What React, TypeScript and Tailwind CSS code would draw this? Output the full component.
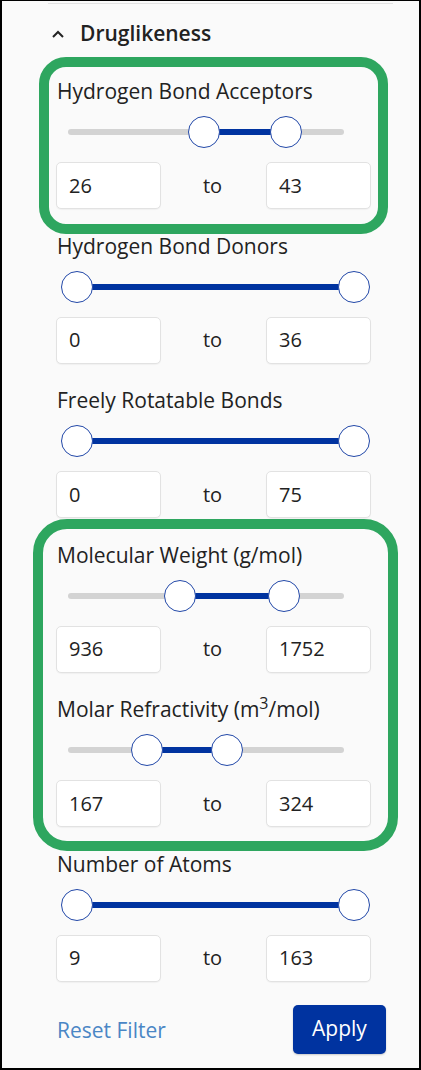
import React from "react";

type Row = { label: React.ReactNode; min: string; max: string; a: number; b: number };

const rows: Row[] = [
  { label: "Hydrogen Bond Acceptors", min: "26", max: "43", a: 204, b: 286 },
  { label: "Hydrogen Bond Donors", min: "0", max: "36", a: 77, b: 354 },
  { label: "Freely Rotatable Bonds", min: "0", max: "75", a: 77, b: 354 },
  { label: "Molecular Weight (g/mol)", min: "936", max: "1752", a: 180, b: 284 },
  {
    label: (
      <>
        Molar Refractivity (m<sup className="text-[16px]">3</sup>/mol)
      </>
    ),
    min: "167",
    max: "324",
    a: 147,
    b: 227,
  },
  { label: "Number of Atoms", min: "9", max: "163", a: 77, b: 354 },
];

const ORIGIN = 61; // page x of the slider box

function Slider({ a, b }: { a: number; b: number }) {
  const ca = a - ORIGIN;
  const cb = b - ORIGIN;
  return (
    <div className="relative h-[57px] w-[309px] ml-[5px]">
      <div className="absolute left-[7px] w-[276px] top-[24px] h-[6px] rounded-full bg-[#d3d3d3]" />
      <div className="absolute top-[24px] h-[6px] bg-[#0033a0]" style={{ left: ca, width: cb - ca }} />
      <div
        className="absolute top-[11px] w-[32px] h-[32px] rounded-full bg-white border border-[#2248a8]"
        style={{ left: ca - 16 }}
      />
      <div
        className="absolute top-[11px] w-[32px] h-[32px] rounded-full bg-white border border-[#2248a8]"
        style={{ left: cb - 16 }}
      />
    </div>
  );
}

function Box({ v }: { v: string }) {
  return (
    <div className="w-[105px] h-[47px] rounded-[5px] bg-white border border-[#e2e2e2] shadow-[0_1px_1px_rgba(0,0,0,0.04)] flex items-center pl-[12px] text-[20px] text-[#222]">
      {v}
    </div>
  );
}

function Section({ r }: { r: Row }) {
  return (
    <div className="flex flex-col">
      <div className="h-[28px] leading-[28px] text-[21px] text-[#222] pl-[1px] whitespace-nowrap">{r.label}</div>
      <Slider a={r.a} b={r.b} />
      <div className="flex items-center justify-between w-[315px]">
        <Box v={r.min} />
        <span className="text-[20px] text-[#222] pr-[2px]">to</span>
        <Box v={r.max} />
      </div>
    </div>
  );
}

export default function App() {
  return (
    <div
      className="relative w-[421px] h-[1070px] bg-[#fafafa] border-t border-x-2 border-b-2 border-black overflow-hidden"
      style={{ fontFamily: '"Open Sans", "Noto Sans", sans-serif' }}
    >
      <div className="ml-[46px] mt-[2px] w-[345px] h-px bg-[#e2e2e2]" />
      <div className="flex items-center h-[60px] pl-[49px] pb-[1px]">
        <svg width="14" height="10" viewBox="0 0 14 10" className="mr-[15px]">
          <path d="M2 8 L7 3 L12 8" fill="none" stroke="#222" strokeWidth="2" />
        </svg>
        <span className="text-[21px] font-semibold text-[#222]">Druglikeness</span>
      </div>
      <div className="pl-[54px] pt-[13px] flex flex-col gap-[22.6px]">
        {rows.map((r, i) => (
          <Section key={i} r={r} />
        ))}
        <div className="flex items-center justify-between w-[330px] pl-[1px]">
          <span className="text-[21px] text-[#4a86c5] mt-[3px]">Reset Filter</span>
          <button className="w-[93px] h-[49px] rounded-[5px] bg-[#0033a0] text-white text-[21px] shadow-[0_1px_2px_rgba(0,0,0,0.2)]">
            Apply
          </button>
        </div>
      </div>
      {/* highlight annotations */}
      <div className="absolute left-[37px] top-[56px] w-[349px] h-[177px] rounded-[27px] border-[10px] border-[#2ea65f] pointer-events-none" />
      <div className="absolute left-[31px] top-[518px] w-[365px] h-[332px] rounded-[34px] border-[10px] border-[#2ea65f] pointer-events-none" />
    </div>
  );
}
